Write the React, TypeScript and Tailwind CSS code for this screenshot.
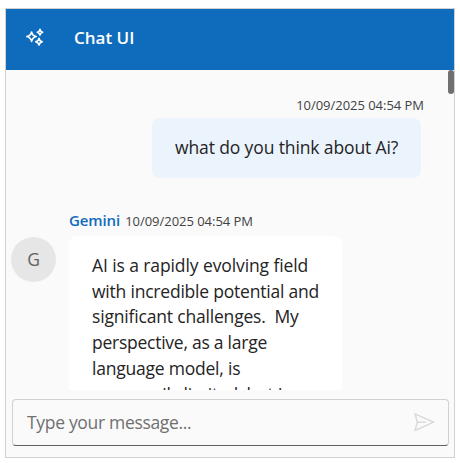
const replyLines = [
  { text: 'AI is a rapidly evolving field', tracking: 'tracking-[-0.1px]' },
  { text: 'with incredible potential and', tracking: 'tracking-[-0.21px]' },
  { text: 'significant challenges.  My', tracking: 'tracking-[-0.18px]' },
  { text: 'perspective, as a large', tracking: 'tracking-[-0.25px]' },
  { text: 'language model, is', tracking: 'tracking-[-0.22px]' },
  { text: 'necessarily limited, but I', tracking: 'tracking-[-0.25px]' },
];

function Sparkles() {
  return (
    <svg className="mb-1 h-5 w-5 shrink-0" viewBox="0 0 20 20" fill="none" stroke="#fff" strokeWidth="1.6" strokeLinejoin="round">
      <path d="M6.6 4 Q7.4 7.8 11.2 8.6 Q7.4 9.6 6.6 13.4 Q5.7 9.6 1.8 8.6 Q5.7 7.8 6.6 4Z" />
      <path d="M15 1.3 Q15.4 3.7 17.7 4.2 Q15.4 4.7 15 7 Q14.5 4.7 12.3 4.2 Q14.5 3.7 15 1.3Z" />
      <path d="M14 10.4 Q14.5 13.2 17.3 13.7 Q14.5 14.3 14 17 Q13.4 14.3 10.7 13.7 Q13.4 13.2 14 10.4Z" />
    </svg>
  );
}

function Send() {
  return (
    <svg className="h-5 w-[22px]" viewBox="0 0 22 20" fill="none" stroke="#d8d8d8" strokeWidth="1.4" strokeLinejoin="round">
      <path d="M2 0.8 L20.5 9.2 L2 17.6 L4.3 9.2Z" />
      <path d="M4.3 9.2H13" />
    </svg>
  );
}

export default function App() {
  return (
    <div className="h-[463px] w-[460px] bg-white pt-2 pl-[5px] font-['Open_Sans','Noto_Sans',sans-serif]">
      <main className="flex h-[450px] w-[450px] flex-col border border-[#d1d1d1] bg-[#fafafa]">
        <header className="flex h-[61px] shrink-0 items-center bg-[#0f6cbd] pl-[19px] text-white">
          <Sparkles />
          <h1 className="mb-[3px] ml-[29px] text-[17px] leading-6 font-semibold whitespace-nowrap">Chat UI</h1>
        </header>

        <section className="relative h-80 shrink-0 overflow-hidden">
          <div className="absolute top-0 right-0 h-6 w-1.5 rounded-full bg-[#707070]" />
          <div className="flex flex-col items-end pt-[26px]">
            <time className="mr-[30px] text-[13px] leading-[18px] tracking-[-0.03px] whitespace-nowrap text-[#424242]">10/09/2025 04:54 PM</time>
            <p className="mt-1 mr-[33px] h-[60px] w-[269px] rounded-lg bg-[#ebf3fc] pt-4 pl-[23px] text-[17.5px] leading-[26px] tracking-[-0.12px] whitespace-nowrap text-[#242424]">what do you think about Ai?</p>
          </div>

          <div className="mt-[33px] flex">
            <div className="mt-[26px] ml-[5px] flex h-[45px] w-[45px] shrink-0 items-center justify-center rounded-full bg-[#e6e6e6] text-[17.5px] text-[#616161]">G</div>
            <div className="ml-[13px]">
              <div className="flex h-[25px] items-start whitespace-nowrap">
                <span className="text-[15px] leading-[19px] font-semibold tracking-[-0.1px] text-[#0f6cbd]">Gemini</span>
                <time className="ml-[5px] text-[13px] leading-5 tracking-[-0.03px] text-[#424242]">10/09/2025 04:54 PM</time>
              </div>
              <div className="w-[273px] rounded-lg bg-white pt-[17px] pb-4 pl-[23px] text-[17.5px] leading-[25.7px] whitespace-pre text-[#242424]">
                {replyLines.map((line) => (
                  <p key={line.text} className={line.tracking}>{line.text}</p>
                ))}
              </div>
            </div>
          </div>
        </section>

        <footer className="px-1.5 pt-[9px]">
          <div className="flex h-[47px] w-[437px] items-center justify-between rounded-[4px] border border-[#d1d1d1] border-b-[#616161] pr-[13px] pl-3.5">
            <span className="mb-0.5 text-[17.5px] leading-6 tracking-[-0.32px] whitespace-nowrap text-[#707070]">Type your message...</span>
            <Send />
          </div>
        </footer>
      </main>
    </div>
  );
}
